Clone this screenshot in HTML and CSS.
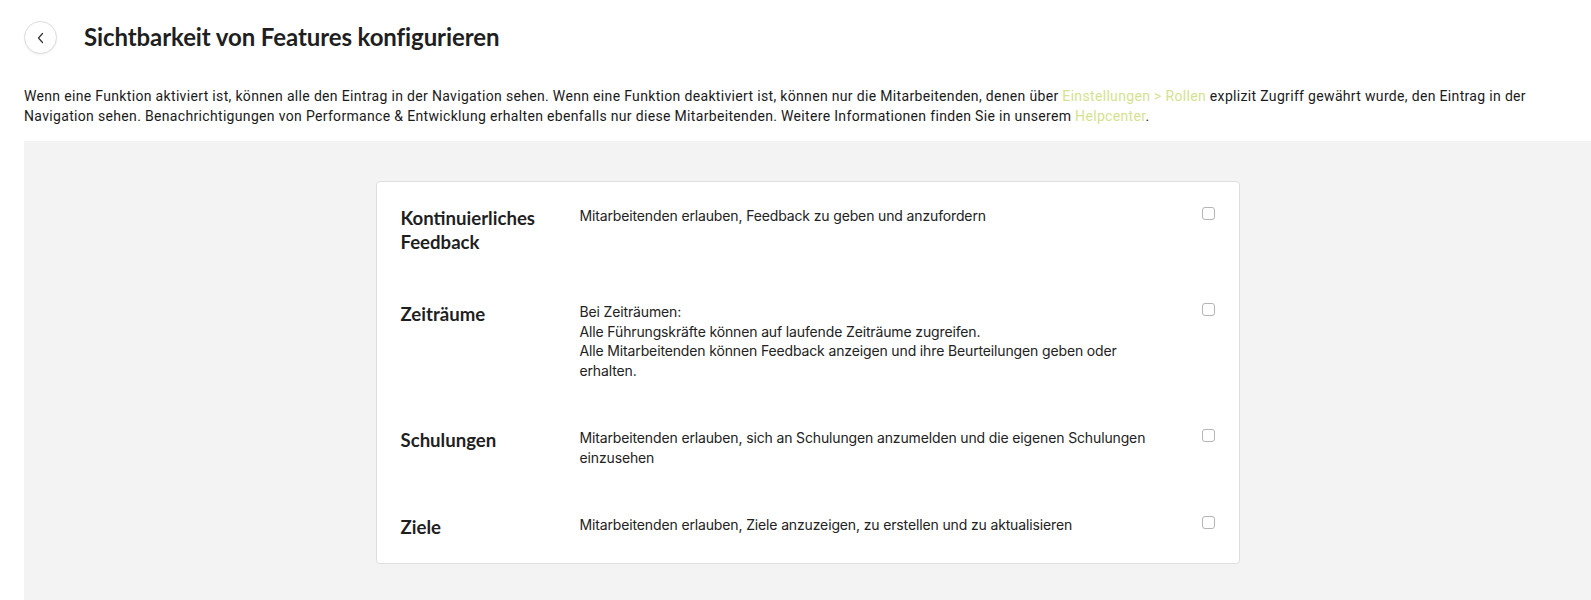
FILE: index.html
```html
<!DOCTYPE html>
<html lang="de">
<head>
<meta charset="utf-8">
<title>Sichtbarkeit von Features konfigurieren</title>
<link rel="stylesheet" href="styles.css">
</head>
<body>
<header class="page-header">
  <button class="back-btn" type="button" aria-label="Zurück">
    <svg width="10" height="12" viewBox="0 0 10 12"><path d="M6.5 1.5 L2.5 6 L6.5 10.5" fill="none" stroke="#333" stroke-width="1.2" stroke-linecap="round" stroke-linejoin="round"/></svg>
  </button>
  <h1 class="page-title">Sichtbarkeit von Features konfigurieren</h1>
</header>
<p class="intro">Wenn eine Funktion aktiviert ist, können alle den Eintrag in der Navigation sehen. Wenn eine Funktion deaktiviert ist, können nur die Mitarbeitenden, denen über <a class="link" href="#">Einstellungen &gt; Rollen</a> explizit Zugriff gewährt wurde, den Eintrag in der Navigation sehen. Benachrichtigungen von Performance &amp; Entwicklung erhalten ebenfalls nur diese Mitarbeitenden. Weitere Informationen finden Sie in unserem <a class="link" href="#">Helpcenter</a>.</p>
<main class="canvas">
  <section class="card">
    <div class="row">
      <h2 class="row-title">Kontinuierliches Feedback</h2>
      <div class="row-desc">Mitarbeitenden erlauben, Feedback zu geben und anzufordern</div>
      <span class="check"></span>
    </div>
    <div class="row">
      <h2 class="row-title">Zeiträume</h2>
      <div class="row-desc">Bei Zeiträumen:<br>Alle Führungskräfte können auf laufende Zeiträume zugreifen.<br>Alle Mitarbeitenden können Feedback anzeigen und ihre Beurteilungen geben oder erhalten.</div>
      <span class="check"></span>
    </div>
    <div class="row">
      <h2 class="row-title">Schulungen</h2>
      <div class="row-desc">Mitarbeitenden erlauben, sich an Schulungen anzumelden und die eigenen Schulungen einzusehen</div>
      <span class="check"></span>
    </div>
    <div class="row">
      <h2 class="row-title">Ziele</h2>
      <div class="row-desc">Mitarbeitenden erlauben, Ziele anzuzeigen, zu erstellen und zu aktualisieren</div>
      <span class="check"></span>
    </div>
  </section>
</main>
</body>
</html>
```
FILE: styles.css
```css
html, body {
  margin: 0;
  padding: 0;
  background: #ffffff;
  color: #1e1e1e;
}
body {
  font-family: Inter, "Liberation Sans", sans-serif;
}
.page-header {
  display: flex;
  align-items: center;
  gap: 27px;
  padding: 21px 24px 0 24px;
}
.back-btn {
  width: 33px;
  height: 33px;
  border-radius: 50%;
  border: 1px solid #dcdcdc;
  background: #fff;
  display: flex;
  align-items: center;
  justify-content: center;
  padding: 0;
  box-shadow: 0 1px 2px rgba(0,0,0,0.06);
}
.page-title {
  margin: -2px 0 0 0;
  font-family: Lato, "Liberation Sans", sans-serif;
  font-weight: 700;
  font-size: 24px;
  line-height: 32px;
  color: #1f1f1f;
  letter-spacing: -0.1px;
}
.intro {
  margin: 32px 0 15px 0;
  padding: 0 24px;
  font-family: Roboto, "Liberation Sans", sans-serif;
  font-size: 14px;
  line-height: 20px;
  letter-spacing: 0.33px;
  color: #1a1a1a;
}
.link {
  color: #d4e28f;
  text-decoration: none;
}
.canvas {
  margin-left: 24px;
  background: #f3f3f3;
  padding: 40px 0 60px 0;
  min-height: 400px;
}
.card {
  width: 862px;
  margin: 0 auto;
  background: #fff;
  border: 1px solid #dedede;
  border-radius: 4px;
}
.row {
  display: flex;
  align-items: flex-start;
  padding: 24px 24px;
}
.row-title {
  margin: 0 25px 0 0;
  width: 154px;
  flex: none;
  font-family: Lato, "Liberation Sans", sans-serif;
  font-weight: 700;
  font-size: 18.6px;
  line-height: 24px;
  color: #1f1f1f;
}
.row-desc {
  width: 580px;
  flex: none;
  font-size: 14px;
  line-height: 19.5px;
  letter-spacing: -0.14px;
  color: #222;
}
.check {
  margin-left: auto;
  margin-top: 1px;
  width: 11px;
  height: 11px;
  border: 1px solid #b5b5b5;
  border-radius: 3px;
  background: #fff;
  flex: none;
}
```
